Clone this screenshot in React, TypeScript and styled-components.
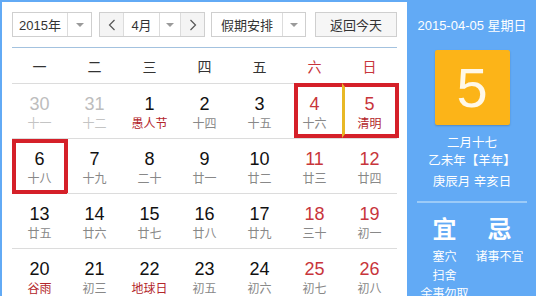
import React from 'react';
import styled, { createGlobalStyle, css } from 'styled-components';

const GlobalStyle = createGlobalStyle`
  body {
    margin: 0;
    font-family: "Liberation Sans", "Noto Sans CJK SC", sans-serif;
    background: #fff;
  }
`;

const BLUE = '#62aaf5';
const RED = '#c8353b';
const MARK = '#d52029';

const Widget = styled.div`
  display: flex;
  width: 534px;
  height: 294px;
  border-top: 2px solid ${BLUE};
  border-left: 2px solid ${BLUE};
  overflow: hidden;
  background: #fff;
`;

const Main = styled.div`
  width: 385px;
  padding: 10px 10px 0;
  flex-shrink: 0;
`;

const Toolbar = styled.div`
  display: flex;
  height: 25px;
  padding-bottom: 10px;
  border-bottom: 1px solid #a3c2df;
`;

const Control = styled.div<{ $w: number; $ml?: number; $bg?: string }>`
  display: flex;
  align-items: stretch;
  width: ${p => p.$w}px;
  margin-left: ${p => p.$ml ?? 0}px;
  box-sizing: border-box;
  border: 1px solid #cfcfcf;
  background: ${p => p.$bg ?? '#fff'};
  font-size: 13px;
  color: #333;
`;

const Label = styled.div`
  flex: 1;
  display: flex;
  align-items: center;
  justify-content: center;
`;

const Caret = styled.div<{ $w?: number }>`
  width: ${p => p.$w ?? 23}px;
  display: flex;
  align-items: center;
  justify-content: center;
  border-left: 1px solid #dcdcdc;
  &::after {
    content: '';
    border-left: 4px solid transparent;
    border-right: 4px solid transparent;
    border-top: 4px solid #9a9a9a;
  }
`;

const Step = styled.div<{ $side: 'left' | 'right' }>`
  width: 23px;
  display: flex;
  align-items: center;
  justify-content: center;
  background: #f4f4f4;
  ${p => (p.$side === 'left' ? 'border-right' : 'border-left')}: 1px solid #dcdcdc;
`;

const Grid = styled.div`
  display: grid;
  grid-template-columns: repeat(7, 55px);
`;

const Head = styled.div<{ $weekend?: boolean }>`
  height: 35px;
  display: flex;
  align-items: center;
  justify-content: center;
  font-size: 14px;
  color: ${p => (p.$weekend ? RED : '#333')};
  border-bottom: 1px solid #dcdcdc;
`;

type Mark = 'single' | 'left' | 'right';

const Cell = styled.div<{ $mark?: Mark }>`
  position: relative;
  height: 54px;
  display: flex;
  flex-direction: column;
  align-items: center;
  border-bottom: 1px solid #dcdcdc;
  ${p =>
    p.$mark &&
    css`
      &::before {
        content: '';
        position: absolute;
        top: ${p.$mark === 'single' ? 0 : -1}px;
        bottom: ${p.$mark === 'single' ? -1 : 0}px;
        left: ${p.$mark === 'left' ? 7 : 0}px;
        right: ${p.$mark === 'right' ? -2 : p.$mark === 'single' ? -1 : 0}px;
        border: 4px solid ${MARK};
        ${p.$mark === 'left' && 'border-right: none;'}
        ${p.$mark === 'right' && `border-left: 3px solid #e8b826;`}
      }
    `}
`;

const Num = styled.div<{ $tone: 'normal' | 'weekend' | 'other' }>`
  margin-top: 9px;
  font-size: 18px;
  line-height: 22px;
  color: ${p => (p.$tone === 'weekend' ? RED : p.$tone === 'other' ? '#bdbdbd' : '#111')};
`;

const Lunar = styled.div<{ $tone: 'normal' | 'fest' | 'other' }>`
  font-size: 12px;
  line-height: 16px;
  margin-top: 1px;
  color: ${p => (p.$tone === 'fest' ? '#b3262b' : p.$tone === 'other' ? '#c4c4c4' : '#888')};
`;

const Side = styled.div`
  width: 129px;
  flex-shrink: 0;
  background: ${BLUE};
  color: #fff;
  display: flex;
  flex-direction: column;
  align-items: center;
  padding: 0 9px 0 10px;
  box-sizing: border-box;
`;

const DateLine = styled.div`
  margin-top: 16px;
  font-size: 13px;
  line-height: 16px;
  white-space: nowrap;
`;

const DayBox = styled.div`
  margin-top: 16px;
  width: 75px;
  height: 75px;
  flex-shrink: 0;
  background: #fcb418;
  border-radius: 2px;
  box-shadow: 0 1px 2px rgba(0, 0, 0, 0.2);
  display: flex;
  align-items: center;
  justify-content: center;
  font-size: 56px;
  color: #fff8e8;
`;

const Info = styled.div<{ $mt: number }>`
  margin-top: ${p => p.$mt}px;
  font-size: 12.5px;
  line-height: 18px;
  white-space: nowrap;
`;

const Divider = styled.div`
  align-self: stretch;
  height: 2px;
  flex-shrink: 0;
  background: #9ccbf8;
  margin-top: 10px;
`;

const Advice = styled.div`
  align-self: stretch;
  display: grid;
  grid-template-columns: 1fr 1fr;
  margin-top: 13px;
`;

const AdviceCol = styled.div`
  display: flex;
  flex-direction: column;
  align-items: center;
`;

const Big = styled.div`
  font-size: 24px;
  font-weight: bold;
  line-height: 28px;
  margin-bottom: 4px;
`;

const Item = styled.div`
  font-size: 12px;
  line-height: 18.5px;
  white-space: nowrap;
`;

const Chevron = ({ dir }: { dir: 'left' | 'right' }) => (
  <svg width="8" height="12" viewBox="0 0 8 12">
    <polyline
      points={dir === 'left' ? '6.5,1 1.5,6 6.5,11' : '1.5,1 6.5,6 1.5,11'}
      fill="none"
      stroke="#555"
      strokeWidth="1.2"
    />
  </svg>
);

type Day = {
  n: number;
  l: string;
  other?: boolean;
  fest?: boolean;
  mark?: Mark;
};

const d = (n: number, l: string, extra: Partial<Day> = {}): Day => ({ n, l, ...extra });

const weeks: Day[][] = [
  [
    d(30, '十一', { other: true }),
    d(31, '十二', { other: true }),
    d(1, '愚人节', { fest: true }),
    d(2, '十四'),
    d(3, '十五'),
    d(4, '十六', { mark: 'left' }),
    d(5, '清明', { fest: true, mark: 'right' }),
  ],
  [
    d(6, '十八', { mark: 'single' }),
    d(7, '十九'),
    d(8, '二十'),
    d(9, '廿一'),
    d(10, '廿二'),
    d(11, '廿三'),
    d(12, '廿四'),
  ],
  [d(13, '廿五'), d(14, '廿六'), d(15, '廿七'), d(16, '廿八'), d(17, '廿九'), d(18, '三十'), d(19, '初一')],
  [
    d(20, '谷雨', { fest: true }),
    d(21, '初三'),
    d(22, '地球日', { fest: true }),
    d(23, '初五'),
    d(24, '初六'),
    d(25, '初七'),
    d(26, '初八'),
  ],
];

const heads = ['一', '二', '三', '四', '五', '六', '日'];

export default function App() {
  return (
    <>
      <GlobalStyle />
      <Widget>
        <Main>
          <Toolbar>
            <Control $w={80}>
              <Label>2015年</Label>
              <Caret />
            </Control>
            <Control $w={106} $ml={7}>
              <Step $side="left">
                <Chevron dir="left" />
              </Step>
              <Label>4月</Label>
              <Caret $w={20} />
              <Step $side="right">
                <Chevron dir="right" />
              </Step>
            </Control>
            <Control $w={95} $ml={6}>
              <Label>假期安排</Label>
              <Caret $w={22} />
            </Control>
            <Control $w={82} $ml={9} $bg="#f6f6f6">
              <Label>返回今天</Label>
            </Control>
          </Toolbar>
          <Grid>
            {heads.map((h, i) => (
              <Head key={h} $weekend={i > 4}>
                {h}
              </Head>
            ))}
            {weeks.flat().map((day, i) => {
              const weekend = i % 7 > 4;
              return (
                <Cell key={i} $mark={day.mark}>
                  <Num $tone={day.other ? 'other' : weekend ? 'weekend' : 'normal'}>{day.n}</Num>
                  <Lunar $tone={day.other ? 'other' : day.fest ? 'fest' : 'normal'}>{day.l}</Lunar>
                </Cell>
              );
            })}
          </Grid>
        </Main>
        <Side>
          <DateLine>2015-04-05 星期日</DateLine>
          <DayBox>5</DayBox>
          <Info $mt={9}>二月十七</Info>
          <Info $mt={0}>乙未年【羊年】</Info>
          <Info $mt={3}>庚辰月 辛亥日</Info>
          <Divider />
          <Advice>
            <AdviceCol>
              <Big>宜</Big>
              <Item>塞穴</Item>
              <Item>扫舍</Item>
              <Item>余事勿取</Item>
            </AdviceCol>
            <AdviceCol>
              <Big>忌</Big>
              <Item>诸事不宜</Item>
            </AdviceCol>
          </Advice>
        </Side>
      </Widget>
    </>
  );
}
